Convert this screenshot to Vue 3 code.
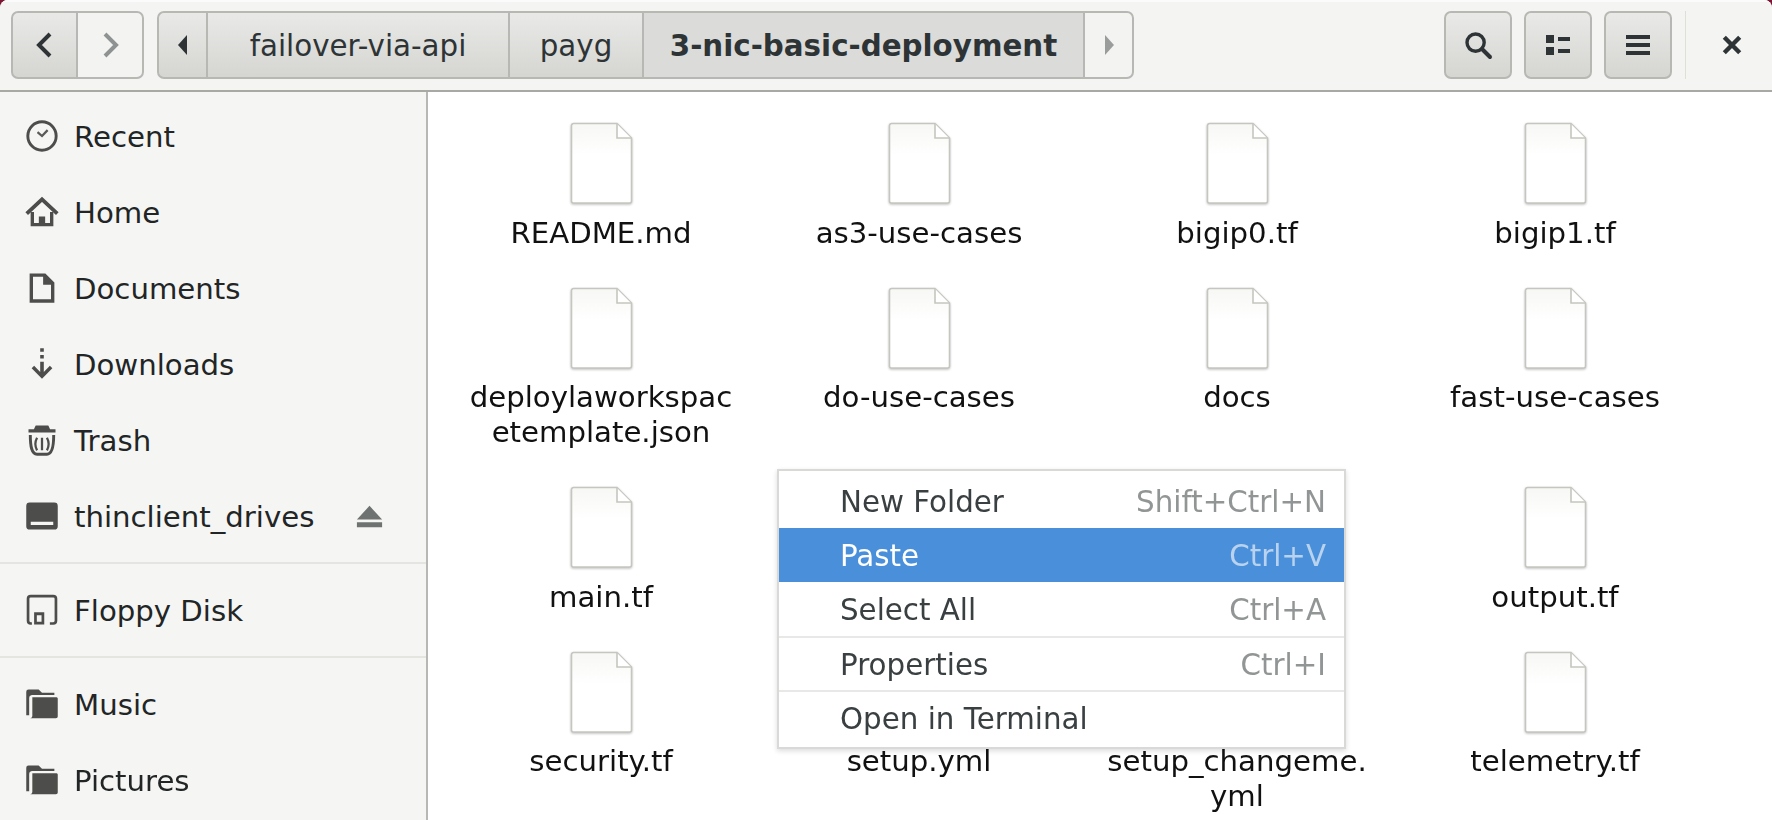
<template>
  <div class="window">
    <header class="toolbar">
      <div class="linked nav">
        <button class="btn nav-btn">
          <svg width="32" height="32" viewBox="0 0 16 16"><path d="M10.500 2.500 5 8l5.500 5.500" fill="none" stroke="#2e3436" stroke-width="2" /></svg>
        </button>
        <button class="btn nav-btn off">
          <svg width="32" height="32" viewBox="0 0 16 16"><path d="M5.500 2.500 11 8l-5.500 5.500" fill="none" stroke="#8f9292" stroke-width="2" /></svg>
        </button>
      </div>
      <div class="linked path">
        <button class="btn arrow">
          <svg width="14" height="24" viewBox="0 0 14 24"><path d="M11 2v20L2 12z" fill="#2e3436" /></svg>
        </button>
        <button class="btn crumb first">failover-via-api</button>
        <button class="btn crumb second">payg</button>
        <button class="btn crumb current">3-nic-basic-deployment</button>
        <button class="btn arrow off">
          <svg width="14" height="24" viewBox="0 0 14 24"><path d="M3 2v20l9-10z" fill="#9a9c9c" /></svg>
        </button>
      </div>
      <div class="spacer"></div>
      <button class="btn tool">
        <svg width="32" height="32" viewBox="0 0 16 16"><circle cx="6.800" cy="6.800" r="4.300" fill="none" stroke="#2e3436" stroke-width="1.700" /><path d="m10 10 4 4" stroke="#2e3436" stroke-width="2" stroke-linecap="round" /></svg>
      </button>
      <button class="btn tool">
        <svg width="32" height="32" viewBox="0 0 16 16"><path d="M2 3h4v4H2zM2 9h4v4H2zM8 4h6v2H8zM8 10h6v2H8z" fill="#2e3436" /></svg>
      </button>
      <button class="btn tool">
        <svg width="32" height="32" viewBox="0 0 16 16"><path d="M2 3h12v2H2zM2 7h12v2H2zM2 11h12v2H2z" fill="#2e3436" /></svg>
      </button>
      <div class="tool-sep"></div>
      <div class="close">
        <svg width="22" height="22" viewBox="0 0 20 20"><path d="m3 3 14 14M17 3 3 17" stroke="#2e3436" stroke-width="4" /></svg>
      </div>
    </header>

    <div class="main">
      <aside class="sidebar">
        <template v-for="(group, g) in places" :key="g">
          <div v-if="g > 0" class="side-sep"></div>
          <div v-for="place in group" :key="place.name" class="place">
            <svg class="place-icon" width="36" height="36" viewBox="0 0 16 16" v-html="icons[place.icon]"></svg>
            <span class="place-name">{{ place.name }}</span>
            <svg v-if="place.eject" class="eject" width="31" height="31" viewBox="0 0 16 16"><path d="M8 2.500 14.500 9.500h-13zM1.500 11h13v2.500h-13z" fill="#6e7371" /></svg>
          </div>
        </template>
      </aside>

      <section class="files">
        <div v-for="file in files" :key="file.id" class="file">
          <svg class="page" width="65" height="86" viewBox="0 0 65 86">
            <defs>
              <linearGradient :id="`pg${file.id}`" x1="0" y1="0" x2="0" y2="1">
                <stop offset="0" stop-color="#f7f7f5" />
                <stop offset="0.4" stop-color="#ffffff" />
              </linearGradient>
            </defs>
            <path d="M4.500 1.500H48L62.500 16v63a2 2 0 0 1-2 2h-56a2 2 0 0 1-2-2V3.500a2 2 0 0 1 2-2z" :fill="`url(#pg${file.id})`" stroke="#c6c6c0" stroke-width="1.600" />
            <path d="M48 2v14h14" fill="#fff" stroke="#c6c6c0" stroke-width="1.600" />
          </svg>
          <div class="file-name">{{ file.name }}</div>
        </div>
      </section>
    </div>

    <div class="menu">
      <div v-for="item in menu" :key="item.label" class="menu-item" :class="{ active: item.active, ruled: item.sep }">
        <span>{{ item.label }}</span>
        <span class="accel">{{ item.accel }}</span>
      </div>
    </div>
  </div>
</template>

<script setup>
const icons = {
  recent: '<circle cx="8" cy="8" r="6.300" fill="none" stroke="#4d4d4b" stroke-width="1.300"/><path d="M6 6.300 8 8l2.500-2.600" fill="none" stroke="#5a5a58" stroke-width="1"/>',
  home: '<path d="M1.200 8.700 8 2.400l6.800 6.300" fill="none" stroke="#4d4d4b" stroke-width="1.700"/><path d="M3.700 8v5.600h8.600V8" fill="none" stroke="#4d4d4b" stroke-width="1.500"/><path d="M6.600 10h2.800v4H6.600z" fill="#4d4d4b"/>',
  doc: '<path d="M2.500 1.500h7l4 4v9h-11zM4 3v10h8V6.500H8.500V3z" fill="#4d4d4b" fill-rule="evenodd"/>',
  download: '<path d="M7.200 1h1.600v1.600H7.200zM7.200 4h1.600v1.600H7.200zM7.200 7h1.600v4.500l2.700-2.700 1.100 1.100L8 14.500 3.400 9.900l1.100-1.100 2.700 2.700z" fill="#4d4d4b"/>',
  trash: '<path d="M5.200 1.500h5.600l.8 1.700H14v1.500H2V3.200h2.400z" fill="#4d4d4b"/><path d="M2.800 5.800c0 5 .6 8.500 3 8.500h4.400c2.400 0 3-3.500 3-8.500" fill="none" stroke="#4d4d4b" stroke-width="1.300"/><path d="M5.800 7q-1.500 2.800 0 5.600M10.200 7q1.500 2.800 0 5.600M8 7v5.600" fill="none" stroke="#4d4d4b" stroke-width="1"/>',
  drive: '<path d="M2.500 2h11A1.500 1.500 0 0 1 15 3.500v9a1.500 1.500 0 0 1-1.500 1.500h-11A1.500 1.500 0 0 1 1 12.500v-9A1.500 1.500 0 0 1 2.500 2zM3 10.500v1.500h10v-1.500z" fill="#4d4d4b" fill-rule="evenodd"/>',
  floppy: '<path d="M3.500 14H3a1.200 1.200 0 0 1-1.200-1.200V3A1.200 1.200 0 0 1 3 1.800h10A1.200 1.200 0 0 1 14.200 3v9.800A1.200 1.200 0 0 1 13 14h-1.500" fill="none" stroke="#4d4d4b" stroke-width="1.200"/><path d="M4.500 9h4.500v5.400H4.500zM5.700 10.300v2.900h2.100v-2.900z" fill="#4d4d4b" fill-rule="evenodd"/>',
  folder: '<path d="M2 1.500h4.500L8 3h5.500v1H3.500A1.500 1.500 0 0 0 2.300 5.500V13H1V2.500a1 1 0 0 1 1-1z" fill="#4d4d4b"/><path d="M3.700 5h10.800a.6.6 0 0 1 .5.600V13.500a.8.800 0 0 1-.8.800H2.800a1 1 0 0 0 .9-1z" fill="#4d4d4b"/>'
};

const places = [
  [
    { name: 'Recent', icon: 'recent' },
    { name: 'Home', icon: 'home' },
    { name: 'Documents', icon: 'doc' },
    { name: 'Downloads', icon: 'download' },
    { name: 'Trash', icon: 'trash' },
    { name: 'thinclient_drives', icon: 'drive', eject: true }
  ],
  [{ name: 'Floppy Disk', icon: 'floppy' }],
  [
    { name: 'Music', icon: 'folder' },
    { name: 'Pictures', icon: 'folder' }
  ]
];

// row 3 middle names are behind the menu, so they stay empty
const files = [
  'README.md', 'as3-use-cases', 'bigip0.tf', 'bigip1.tf',
  'deploylaworkspac\u200betemplate.json', 'do-use-cases', 'docs', 'fast-use-cases',
  'main.tf', '', '', 'output.tf',
  'security.tf', 'setup.yml', 'setup_changeme.\u200byml', 'telemetry.tf'
].map((name, id) => ({ id, name }));

const menu = [
  { label: 'New Folder', accel: 'Shift+Ctrl+N' },
  { label: 'Paste', accel: 'Ctrl+V', active: true },
  { label: 'Select All', accel: 'Ctrl+A' },
  { label: 'Properties', accel: 'Ctrl+I', sep: true },
  { label: 'Open in Terminal', accel: '', sep: true }
];
</script>

<style scoped>
.window {
  position: relative;
  width: 1772px;
  height: 820px;
  overflow: hidden;
  display: flex;
  flex-direction: column;
  background: #fff;
  border-radius: 8px 8px 0 0;
  color: #2e3436;
  font-family: "DejaVu Sans", sans-serif;
  font-size: 29.200px;
  filter: blur(0.6px);
}

.toolbar {
  height: 92px;
  box-sizing: border-box;
  flex: none;
  display: flex;
  align-items: flex-start;
  padding: 11px 0 0 11px;
  background: #f4f4f3;
  border-top: 2px solid #fbfbfb;
  border-bottom: 2px solid #a8a8a4;
  font-size: 29.330px;
}

.linked {
  display: flex;
  height: 68px;
  margin-top: -2px;
}

.btn {
  box-sizing: border-box;
  height: 68px;
  display: flex;
  align-items: center;
  justify-content: center;
  padding: 0;
  border: 2px solid #b7b7b3;
  background: linear-gradient(#e9e9e7, #d5d5d2);
  color: #2e3436;
  font: inherit;
}

.crumb {
  padding-top: 2px;
  border-left-width: 1px;
  border-right-width: 1px;
}

.off {
  background: #f3f3f1;
  color: #8f9292;
}

.nav-btn {
  width: 66px;
  border-radius: 0;
}

.nav-btn:first-child {
  border-radius: 7px 0 0 7px;
  border-right-width: 1px;
}

.nav-btn:last-child {
  width: 67px;
  border-radius: 0 7px 7px 0;
  border-left-width: 1px;
}

.path {
  margin-left: 13px;
}

.arrow {
  width: 50px;
}

.arrow:first-child {
  border-radius: 7px 0 0 7px;
  border-right-width: 1px;
}

.arrow:last-child {
  border-radius: 0 7px 7px 0;
  border-left-width: 1px;
}

.first {
  width: 302px;
}

.second {
  width: 134px;
}

.current {
  width: 441px;
  background: #dbdbd9;
  font-weight: 700;
}

.spacer {
  flex: 1;
}

.tool {
  width: 68px;
  margin: -2px 12px 0 0;
  border-radius: 7px;
}

.tool-sep {
  width: 1px;
  height: 68px;
  margin: -2px 0 0 1px;
  background: #dededb;
}

.close {
  width: 86px;
  height: 68px;
  margin-top: -2px;
  padding-left: 6px;
  box-sizing: border-box;
  display: flex;
  align-items: center;
  justify-content: center;
}

.main {
  flex: 1;
  display: flex;
  min-height: 0;
}

.sidebar {
  width: 428px;
  box-sizing: border-box;
  flex: none;
  padding-top: 6px;
  background: #f5f5f3;
  border-right: 2px solid #b7b7b3;
}

.place {
  height: 76px;
  display: flex;
  align-items: center;
  padding: 0 41px 0 24px;
}

.place-icon {
  flex: none;
  margin-right: 14px;
}

.place-name {
  flex: 1;
  padding-top: 2px;
  color: #222526;
}

.side-sep {
  height: 2px;
  margin: 8px 0;
  background: #e4e4e1;
}

.files {
  flex: 1;
  display: grid;
  grid-template-columns: repeat(4, 318px);
  align-content: start;
  align-items: start;
  row-gap: 36px;
  padding: 30px 0 0 14px;
  background: #fff;
}

.file {
  display: flex;
  flex-direction: column;
  align-items: center;
}

.page {
  display: block;
  filter: drop-shadow(0 1px 1px rgba(0, 0, 0, 0.24));
}

.file-name {
  width: 270px;
  min-height: 35px;
  margin-top: 7.500px;
  line-height: 35px;
  text-align: center;
  color: #111;
  overflow-wrap: anywhere;
}

.menu {
  position: absolute;
  left: 777px;
  top: 469px;
  width: 569px;
  box-sizing: border-box;
  padding: 3px 0;
  background: #fff;
  border: 2px solid #d9d9d7;
  box-shadow: 0 2px 5px rgba(0, 0, 0, 0.14);
  font-size: 29.330px;
}

.menu-item {
  height: 54px;
  box-sizing: border-box;
  display: flex;
  align-items: center;
  justify-content: space-between;
  padding: 1px 18px 0 61px;
  color: #3a4042;
}

.ruled {
  border-top: 2px solid #e8e8e6;
}

.accel {
  color: #929595;
}

.active {
  background: #4a8fd9;
  color: #fff;
}

.active .accel {
  color: #b9d3ef;
}
</style>

<style>
html,
body {
  margin: 0;
  background: #7d1634;
  overflow: hidden;
}
</style>
